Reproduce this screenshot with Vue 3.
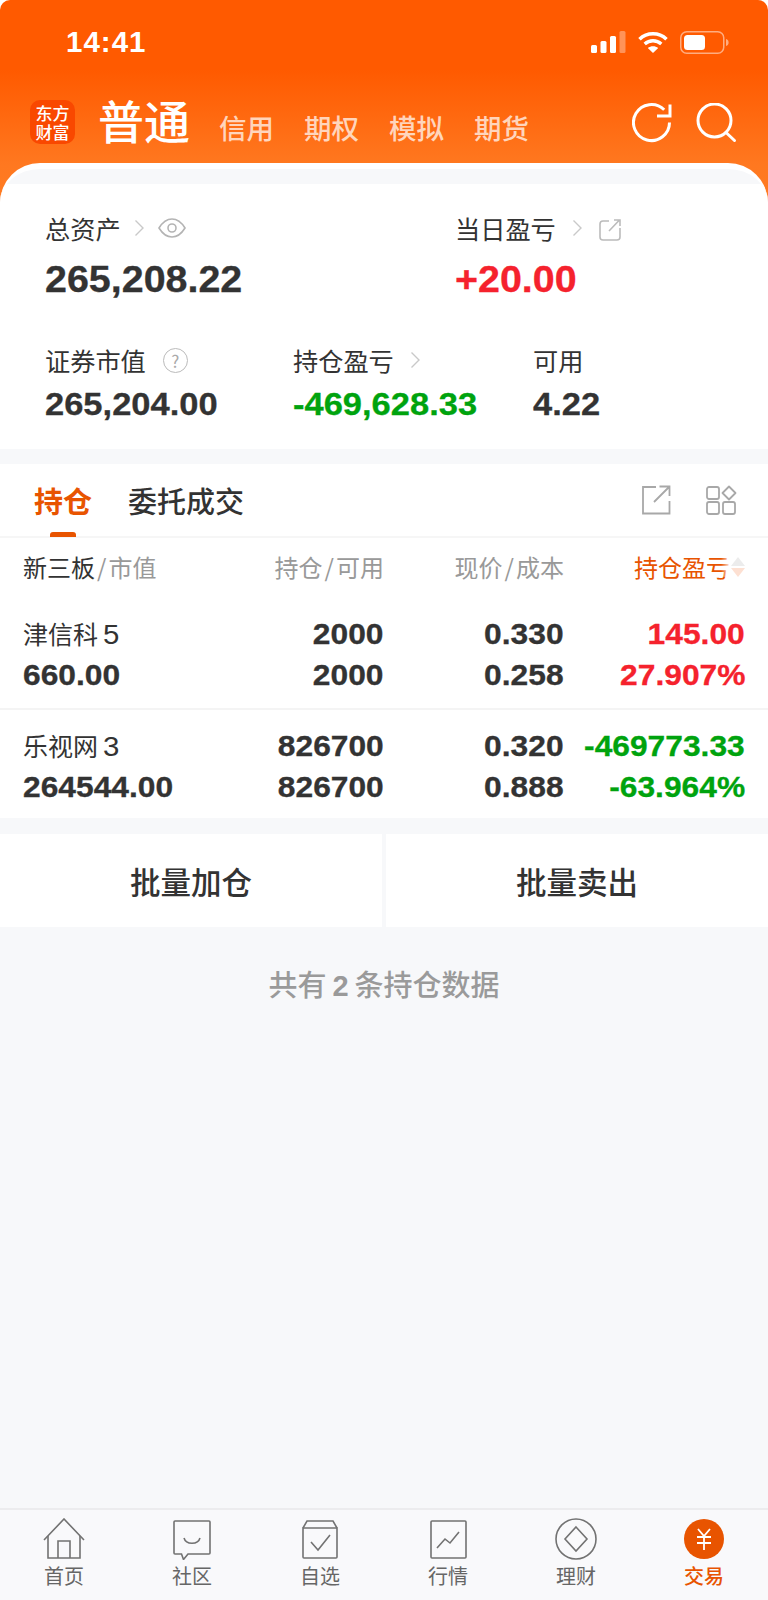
<script setup>
const subTabs = ['信用', '期权', '模拟', '期货']
const rows = [
  { name: '津信科', code: '5', value: '660.00', hold: '2000', avail: '2000', price: '0.330', cost: '0.258', pl: '145.00', pct: '27.907%', tone: 'up' },
  { name: '乐视网', code: '3', value: '264544.00', hold: '826700', avail: '826700', price: '0.320', cost: '0.888', pl: '-469773.33', pct: '-63.964%', tone: 'down' }
]
const navItems = [
  { label: '首页', key: 'home' },
  { label: '社区', key: 'chat' },
  { label: '自选', key: 'box' },
  { label: '行情', key: 'chart' },
  { label: '理财', key: 'gem' },
  { label: '交易', key: 'trade', active: true }
]
</script>

<template>
  <div class="page">
    <header class="hero">
      <div class="status">
        <span class="time">14:41</span>
        <div class="status-icons">
          <svg width="35" height="22" viewBox="0 0 35 22">
            <rect x="0" y="14" width="6" height="8" rx="1.5" fill="#fff" />
            <rect x="9.5" y="10" width="6" height="12" rx="1.5" fill="#fff" />
            <rect x="19" y="5" width="6" height="17" rx="1.5" fill="#fff" />
            <rect x="28.5" y="0" width="6" height="22" rx="1.5" fill="#fff" fill-opacity=".35" />
          </svg>
          <svg width="30" height="22" viewBox="0 0 30 22">
            <path d="M1.5 8.2C9 1 21 1 28.5 8.2" fill="none" stroke="#fff" stroke-width="3.6" />
            <path d="M6.7 13C11.5 8.6 18.5 8.6 23.3 13" fill="none" stroke="#fff" stroke-width="3.4" />
            <path d="M9.8 17 15 22l5.2-5c-3-2.4-7.4-2.4-10.4 0Z" fill="#fff" />
          </svg>
          <svg width="49" height="23" viewBox="0 0 49 23">
            <rect x=".75" y=".75" width="43" height="21.5" rx="6" fill="none" stroke="#fff" stroke-opacity=".5" stroke-width="1.5" />
            <rect x="4" y="4" width="21" height="15" rx="3.5" fill="#fff" />
            <path d="M46 8c1.8.5 2.6 1.800 2.600 3.500S47.800 14.500 46 15Z" fill="#fff" fill-opacity=".5" />
          </svg>
        </div>
      </div>
      <nav class="topnav">
        <div class="logo">东方财富</div>
        <span class="main-tab">普通</span>
        <div class="sub-tabs">
          <span v-for="t in subTabs" :key="t">{{ t }}</span>
        </div>
        <div class="top-actions">
          <svg width="40" height="40" viewBox="0 0 40 40" fill="none" stroke="#fff" stroke-width="3">
            <path d="M32.200 6.800A18 18 0 1 0 37.500 19.500" />
            <path d="M38 1.500V13H25" />
          </svg>
          <svg width="41" height="41" viewBox="0 0 41 41" fill="none" stroke="#fff" stroke-width="3">
            <circle cx="18.500" cy="17.500" r="16.500" />
            <path d="M30 29.500l8.500 8" stroke-linecap="round" />
          </svg>
        </div>
      </nav>
    </header>

    <main class="sheet">
      <section class="summary">
        <div class="sum-row first">
          <div class="sum-cell wide">
            <div class="label tight">
              <span>总资产</span>
              <svg class="chev" width="11" height="18" viewBox="0 0 11 18"><path d="M1.500 1.500 9 9l-7.500 7.500" fill="none" stroke="#c9c9c9" stroke-width="1.400" /></svg>
              <svg width="28" height="20" viewBox="0 0 28 20" fill="none" stroke="#b4b4b4" stroke-width="1.600"><path d="M1 10C5 3.500 9.500 1 14 1s9 2.500 13 9c-4 6.500-8.500 9-13 9S5 16.500 1 10Z" /><circle cx="14" cy="10" r="4" /></svg>
            </div>
            <div class="big"><span class="num">265,208.22</span></div>
          </div>
          <div class="sum-cell">
            <div class="label">
              <span>当日盈亏</span>
              <svg class="chev" width="11" height="18" viewBox="0 0 11 18"><path d="M1.500 1.500 9 9l-7.500 7.500" fill="none" stroke="#c9c9c9" stroke-width="1.400" /></svg>
              <svg class="ext" width="22" height="22" viewBox="0 0 22 22" fill="none" stroke="#bbb" stroke-width="1.600"><path d="M10 2H4a3 3 0 0 0-3 3v13a3 3 0 0 0 3 3h14a3 3 0 0 0 3-3V9" /><path d="M10 12 20 1.500M15 1h6v6" /></svg>
            </div>
            <div class="big up"><span class="num">+20.00</span></div>
          </div>
        </div>
        <div class="sum-row second">
          <div class="sum-cell c1">
            <div class="label">
              <span>证券市值</span>
              <span class="help">?</span>
            </div>
            <div class="mid"><span class="num">265,204.00</span></div>
          </div>
          <div class="sum-cell c2">
            <div class="label">
              <span>持仓盈亏</span>
              <svg class="chev" width="11" height="18" viewBox="0 0 11 18"><path d="M1.500 1.500 9 9l-7.500 7.500" fill="none" stroke="#c9c9c9" stroke-width="1.400" /></svg>
            </div>
            <div class="mid down"><span class="num">-469,628.33</span></div>
          </div>
          <div class="sum-cell">
            <div class="label"><span>可用</span></div>
            <div class="mid"><span class="num">4.22</span></div>
          </div>
        </div>
      </section>

      <section class="positions">
        <div class="tabs">
          <div class="tab active">持仓<i class="ink"></i></div>
          <div class="tab">委托成交</div>
          <div class="tab-tools">
            <svg width="30" height="30" viewBox="0 0 30 30" fill="none" stroke="#a8a8a8" stroke-width="1.800"><path d="M15 2H2v26.500h26.500V16" /><path d="M13 17 28 2M18.500 1.500h10V11" /></svg>
            <svg width="31" height="30" viewBox="0 0 31 30" fill="none" stroke="#a8a8a8" stroke-width="1.800">
              <rect x="1" y="2" width="12" height="12" rx="2" />
              <rect x="1" y="17" width="12" height="12" rx="2" />
              <rect x="17" y="17" width="12" height="12" rx="2" />
              <path d="M23 1.500 29.500 8 23 14.500 16.500 8Z" stroke-linejoin="round" />
            </svg>
          </div>
        </div>

        <div class="grid head">
          <div class="col-name"><b>新三板</b><em>/</em>市值</div>
          <div>持仓<em>/</em>可用</div>
          <div>现价<em>/</em>成本</div>
          <div class="col-sort">
            持仓盈亏
            <span class="sort"><i class="tri-up"></i><i class="tri-down"></i></span>
          </div>
        </div>

        <div v-for="r in rows" :key="r.name" class="row">
          <div class="grid line">
            <div class="name">{{ r.name }}<span class="code">{{ r.code }}</span></div>
            <div><span class="num end">{{ r.hold }}</span></div>
            <div><span class="num end">{{ r.price }}</span></div>
            <div :class="r.tone"><span class="num end">{{ r.pl }}</span></div>
          </div>
          <div class="grid line">
            <div><span class="num">{{ r.value }}</span></div>
            <div><span class="num end">{{ r.avail }}</span></div>
            <div><span class="num end">{{ r.cost }}</span></div>
            <div :class="r.tone"><span class="num end">{{ r.pct }}</span></div>
          </div>
        </div>
      </section>

      <div class="actions">
        <button type="button">批量加仓</button>
        <button type="button">批量卖出</button>
      </div>

      <p class="count">共有<span>2</span>条持仓数据</p>
    </main>

    <footer class="tabbar">
      <div v-for="n in navItems" :key="n.key" class="tabitem" :class="{ on: n.active }">
        <svg width="44" height="42" viewBox="0 0 44 42" fill="none" stroke="#727272" stroke-width="1.600">
          <template v-if="n.key === 'home'">
            <path d="M2 22 22 1l20 21" /><path d="M6 18v22h32V18" /><path d="M16 40V23h12v17" />
          </template>
          <template v-else-if="n.key === 'chat'">
            <path d="M5 3h34a1 1 0 0 1 1 1v31a1 1 0 0 1-1 1H18l-4.500 5.500L11.500 36H5a1 1 0 0 1-1-1V4a1 1 0 0 1 1-1Z" /><path d="M14 20c2 7 14 7 16 0" />
          </template>
          <template v-else-if="n.key === 'box'">
            <path d="M5 10h34v29a1 1 0 0 1-1 1H6a1 1 0 0 1-1-1Z" /><path d="M5 10 9 3h26l4 7" /><path d="M13 24l7 8 12-15" />
          </template>
          <template v-else-if="n.key === 'chart'">
            <path d="M6 3h33a1 1 0 0 1 1 1v35a1 1 0 0 1-1 1H6a1 1 0 0 1-1-1V4a1 1 0 0 1 1-1Z" /><path d="M11 30l8-9 5 4 9-11" />
          </template>
          <template v-else-if="n.key === 'gem'">
            <circle cx="22" cy="21" r="20" /><path d="M22 9l11 12-11 12-11-12Z" />
          </template>
          <template v-else>
            <circle cx="22" cy="21" r="20" fill="#e85400" stroke="none" />
            <path d="M16 11l6 7 6-7M15 19h14M15 25h14M22 18v14" stroke="#fff" stroke-width="1.800" />
          </template>
        </svg>
        <span>{{ n.label }}</span>
      </div>
    </footer>
  </div>
</template>

<style>
html, body { margin: 0; background: #fff; }
</style>

<style scoped>
.page {
  width: 768px;
  height: 1600px;
  display: flex;
  flex-direction: column;
  overflow: hidden;
  background: #f7f8fa;
  border-radius: 10px 10px 0 0;
  font-family: "Liberation Sans", "Noto Sans CJK SC", sans-serif;
  color: #333;
}
.hero {
  height: 205px;
  flex: none;
  background: linear-gradient(180deg, #ff5a00 0, #ff5a00 70px, #ff7820 165px, #ff7c22 205px);
  color: #fff;
}
.status {
  height: 84px;
  display: flex;
  justify-content: space-between;
  align-items: center;
  padding: 0 39px 0 66px;
}
.time { font-size: 29.500px; font-weight: 700; letter-spacing: 1px; }
.status-icons { display: flex; align-items: center; gap: 12px; }
.status-icons svg { display: block; }
.topnav {
  display: flex;
  align-items: center;
  padding: 15px 31px 0 30px;
}
.logo {
  width: 45px;
  height: 44px;
  box-sizing: border-box;
  padding: 3px 5px;
  border-radius: 10px;
  background: #f94800;
  text-align: center;
  word-break: break-all;
  font-family: "Noto Sans CJK SC", sans-serif;
  font-size: 17px;
  font-weight: 500;
  line-height: 19px;
}
.main-tab {
  margin: -7px 0 0 23px;
  font-family: "Noto Sans CJK SC", sans-serif;
  font-size: 46px;
  font-weight: 500;
  line-height: 50px;
}
.sub-tabs {
  display: flex;
  gap: 30px;
  margin: 10px 0 0 29px;
  font-family: "Noto Sans CJK SC", sans-serif;
  font-size: 27.500px;
  font-weight: 500;
  color: rgba(255, 255, 255, .72);
  line-height: 36px;
}
.top-actions { margin: 3px 0 0 auto; display: flex; gap: 24px; }
.top-actions svg { display: block; }

.sheet {
  flex: 1;
  margin-top: -42px;
  padding-top: 15px;
  border-top: 6px solid #fff;
  border-radius: 40px 40px 0 0;
  background: #f7f8fa;
  overflow: hidden;
}
.summary {
  height: 265px;
  box-sizing: border-box;
  background: #fff;
  padding: 28px 0 0 45px;
}
.sum-row { display: flex; }
.first { height: 132px; }
.wide { width: 410px; }
.c1 { width: 248px; }
.c2 { width: 240px; }
.label {
  display: flex;
  align-items: center;
  gap: 16px;
  height: 32px;
  font-family: "Noto Sans CJK SC", sans-serif;
  font-size: 25.200px;
  color: #333;
}
.label.tight { gap: 13px; }
.chev { display: block; }
.ext { margin-top: 3px; }
.help {
  width: 25px;
  height: 25px;
  margin-left: 1px;
  border: 1.500px solid #bbb;
  border-radius: 50%;
  display: flex;
  align-items: center;
  justify-content: center;
  box-sizing: border-box;
  font-size: 17px;
  color: #aaa;
}
.num {
  display: inline-block;
  transform: scaleX(1.095);
  transform-origin: left center;
  white-space: nowrap;
  -webkit-text-stroke: .3px currentColor;
}
.num.end { transform-origin: right center; }
.big { margin-top: 14px; font-size: 36px; font-weight: 700; line-height: 44px; }
.mid { margin-top: 10px; font-size: 31.500px; font-weight: 700; line-height: 36px; }
.up { color: #f5222d; }
.down { color: #00a30e; }

.positions { margin-top: 15px; background: #fff; }
.tabs {
  height: 74px;
  box-sizing: border-box;
  border-bottom: 2px solid #f6f6f6;
  display: flex;
  align-items: center;
  padding: 0 31px 0 34px;
  gap: 36px;
  font-family: "Noto Sans CJK SC", sans-serif;
}
.tab { position: relative; font-size: 29px; line-height: 40px; font-weight: 500; color: #333; }
.tab.active { color: #e85400; font-weight: 700; }
.ink {
  position: absolute;
  left: 16px;
  bottom: -17px;
  width: 26px;
  height: 5px;
  border-radius: 3px 3px 0 0;
  background: #e85400;
}
.tab-tools { margin-left: auto; display: flex; gap: 35px; }
.tab-tools svg { display: block; }

.grid {
  display: grid;
  grid-template-columns: 198px 163px 180px 181px;
  padding: 0 23px;
  text-align: right;
}
.grid > div:first-child { text-align: left; }
.head {
  height: 59px;
  padding-bottom: 2px;
  box-sizing: border-box;
  align-items: center;
  font-family: "Noto Sans CJK SC", sans-serif;
  font-size: 24px;
  color: #999;
  white-space: nowrap;
}
.head b { font-weight: 400; color: #333; }
.head em { font-style: normal; margin: 0 2px; }
.col-sort { position: relative; color: #e85400; padding-right: 15px; }
.sort {
  position: absolute;
  right: 0;
  top: 50%;
  transform: translateY(-50%);
  display: flex;
  flex-direction: column;
  gap: 2px;
  padding-left: 10px;
  background: linear-gradient(90deg, rgba(255, 255, 255, 0), #fff 10px);
}
.sort i { display: block; width: 0; height: 0; border-left: 7px solid transparent; border-right: 7px solid transparent; }
.tri-up { border-bottom: 9px solid #ececec; }
.tri-down { border-top: 9px solid #fde0d2; }
.row {
  height: 111px;
  box-sizing: border-box;
  padding-top: 17px;
}
.row + .row { border-top: 2px solid #f4f4f4; height: 110px; padding-top: 16px; }
.line {
  height: 41px;
  align-items: center;
  font-size: 29px;
  font-weight: 700;
  white-space: nowrap;
}
.name {
  margin-top: -3px;
  font-family: "Noto Sans CJK SC", sans-serif;
  font-size: 25px;
  font-weight: 400;
  letter-spacing: 0;
}
.code {
  display: inline-block;
  margin-left: 5px;
  font-family: "Liberation Sans", sans-serif;
  font-size: 28px;
  transform: scaleX(1.05);
  transform-origin: left center;
}

.actions {
  margin-top: 16px;
  display: flex;
  gap: 4px;
  height: 93px;
}
.actions button {
  flex: 1;
  border: 0;
  padding: 0;
  background: #fff;
  font-family: "Noto Sans CJK SC", sans-serif;
  font-size: 30.500px;
  font-weight: 500;
  color: #333;
}
.count {
  margin: 36px 0 0;
  text-align: center;
  font-family: "Noto Sans CJK SC", sans-serif;
  font-size: 29px;
  font-weight: 500;
  line-height: 40px;
  color: #9a9a9a;
}
.count span {
  margin: 0 6px;
  font-family: "Liberation Sans", sans-serif;
  font-weight: 700;
}

.tabbar {
  height: 92px;
  flex: none;
  box-sizing: border-box;
  border-top: 2px solid #ececee;
  background: #f9f9fb;
  display: grid;
  grid-template-columns: repeat(6, 1fr);
}
.tabitem {
  display: flex;
  flex-direction: column;
  align-items: center;
  padding-top: 8px;
  font-family: "Noto Sans CJK SC", sans-serif;
  font-size: 20px;
  line-height: 28px;
  color: #666;
}
.tabitem svg { display: block; margin-bottom: 2px; }
.tabitem.on { color: #e85400; font-weight: 500; }
</style>
